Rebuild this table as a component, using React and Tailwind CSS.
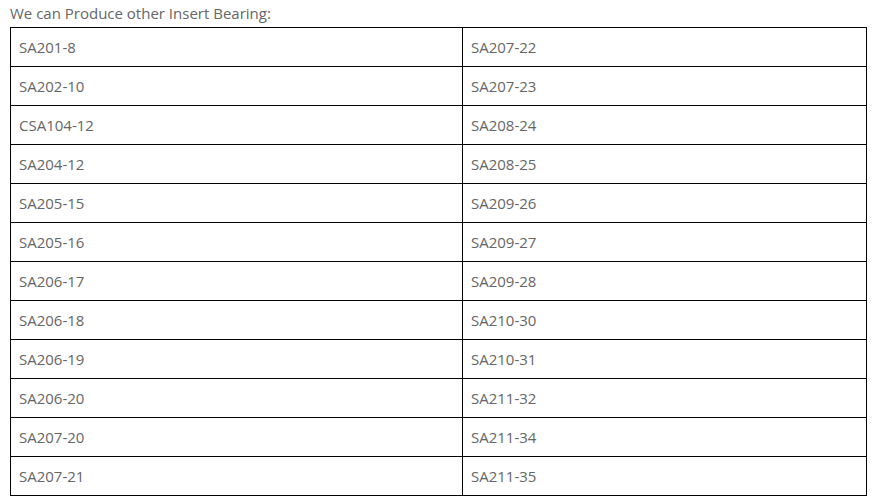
import React from "react";

const rows = [
  ["SA201-8", "SA207-22"],
  ["SA202-10", "SA207-23"],
  ["CSA104-12", "SA208-24"],
  ["SA204-12", "SA208-25"],
  ["SA205-15", "SA209-26"],
  ["SA205-16", "SA209-27"],
  ["SA206-17", "SA209-28"],
  ["SA206-18", "SA210-30"],
  ["SA206-19", "SA210-31"],
  ["SA206-20", "SA211-32"],
  ["SA207-20", "SA211-34"],
  ["SA207-21", "SA211-35"],
];

export default function App() {
  return (
    <div className="w-[877px] h-[503px] bg-white pl-[10px] text-[#666] text-[15px]" style={{ fontFamily: '"Open Sans", "Noto Sans", sans-serif' }}>
      <div className="h-[27px] pt-[3px] leading-[20px]">We can Produce other Insert Bearing:</div>
      <div className="grid grid-cols-[452px_404px] w-[857px] border-l border-t border-black">
        {rows.map(([a, b], i) => (
          <React.Fragment key={i}>
            <div className="h-[39px] border-r border-b border-black flex items-center px-[8px]">{a}</div>
            <div className="h-[39px] border-r border-b border-black flex items-center px-[8px]">{b}</div>
          </React.Fragment>
        ))}
      </div>
    </div>
  );
}
